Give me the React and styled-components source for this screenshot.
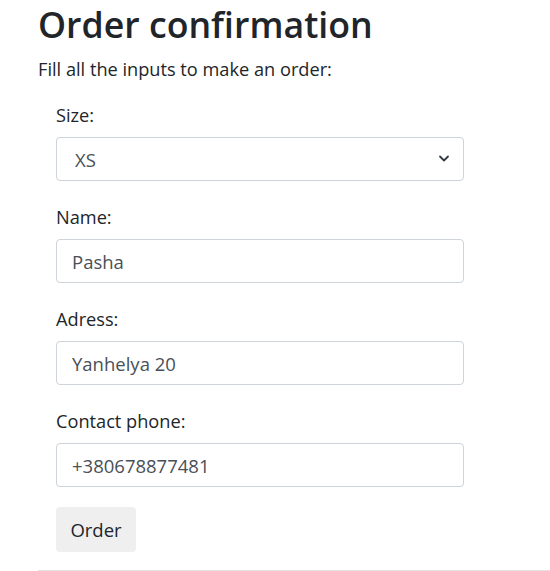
import React from "react";
import styled, { createGlobalStyle } from "styled-components";

const Global = createGlobalStyle`
  html, body { margin: 0; padding: 0; background: #fff; }
  body {
    font-family: "Open Sans", "Noto Sans", Arial, sans-serif;
    color: #212529;
    font-size: 18px;
    line-height: 1.5;
  }
  * { box-sizing: border-box; }
`;

const Page = styled.div`
  padding: 0 0 0 38px;
  width: 550px;
`;

const Title = styled.h1`
  margin: 0 0 8px;
  font-size: 35.7px;
  font-weight: 600;
  line-height: 48px;
`;

const Lead = styled.p`
  margin: 0 0 19px;
  font-size: 18.2px;
  line-height: 27px;
`;

const Form = styled.form`
  padding-left: 18px;
  display: flex;
  flex-direction: column;
  align-items: flex-start;
`;

const Group = styled.div`
  width: 408px;
  margin-bottom: 23px;
  display: flex;
  flex-direction: column;
`;

const Label = styled.label`
  font-size: 18.2px;
  line-height: 27px;
  margin-bottom: 8px;
`;

const fieldCss = `
  width: 100%;
  height: 44px;
  border: 1px solid #ced4da;
  border-radius: 4px;
  font-family: inherit;
  font-size: 18.5px;
  color: #495057;
  background: #fff;
  padding: 0 15px;
  outline: none;
`;

const Input = styled.input`
  ${fieldCss}
`;

const SelectWrap = styled.div`
  position: relative;
  width: 100%;
`;

const Select = styled.select`
  ${fieldCss}
  appearance: none;
  padding-left: 18px;
`;

const Chevron = styled.svg`
  position: absolute;
  right: 14px;
  top: 17px;
  width: 12px;
  height: 9px;
  pointer-events: none;
`;

const Button = styled.button`
  margin-top: -3px;
  width: 80px;
  height: 45px;
  border: none;
  border-radius: 4px;
  background: #efefef;
  color: #212529;
  font-family: inherit;
  font-size: 18.5px;
`;

const Rule = styled.hr`
  margin: 18px 0 0;
  border: none;
  border-top: 1px solid #e2e2e2;
`;

export default function App() {
  return (
    <>
      <Global />
      <Page>
        <Title>Order confirmation</Title>
        <Lead>Fill all the inputs to make an order:</Lead>
        <Form onSubmit={(e) => e.preventDefault()}>
          <Group>
            <Label>Size:</Label>
            <SelectWrap>
              <Select defaultValue="XS">
                <option>XS</option>
                <option>S</option>
                <option>M</option>
                <option>L</option>
                <option>XL</option>
              </Select>
              <Chevron viewBox="0 0 12 9">
                <path d="M2 2.5l4 4 4-4" fill="none" stroke="#343a40" strokeWidth="1.8" strokeLinecap="round" strokeLinejoin="round" />
              </Chevron>
            </SelectWrap>
          </Group>
          <Group>
            <Label>Name:</Label>
            <Input defaultValue="Pasha" />
          </Group>
          <Group>
            <Label>Adress:</Label>
            <Input defaultValue="Yanhelya 20" />
          </Group>
          <Group>
            <Label>Contact phone:</Label>
            <Input defaultValue="+380678877481" />
          </Group>
          <Button type="submit">Order</Button>
        </Form>
        <Rule />
      </Page>
    </>
  );
}
